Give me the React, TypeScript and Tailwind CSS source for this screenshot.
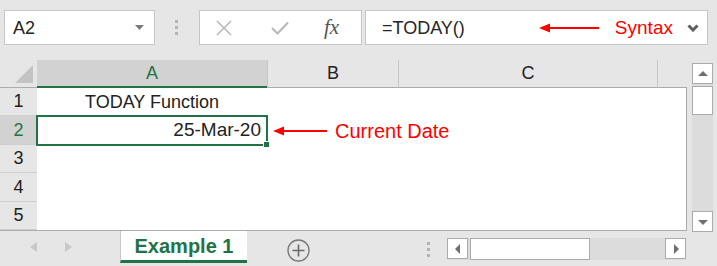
import React from 'react';

const rows = [
  { n: 1, h: 'h-[28px]' },
  { n: 2, h: 'h-[29px]' },
  { n: 3, h: 'h-[28px]' },
  { n: 4, h: 'h-[29px]' },
  { n: 5, h: 'h-[28px]' },
];

const Dots: React.FC = () => (
  <div className="flex flex-col gap-[3px]">
    <div className="w-[3px] h-[3px] bg-[#b4b4b4]" />
    <div className="w-[3px] h-[3px] bg-[#b4b4b4]" />
    <div className="w-[3px] h-[3px] bg-[#b4b4b4]" />
  </div>
);

const RedArrow: React.FC<{ width: number }> = ({ width }) => (
  <svg width={width} height="10" viewBox={`0 0 ${width} 10`}>
    <line x1="8" y1="5" x2={width} y2="5" stroke="#ff0000" strokeWidth="2" />
    <polygon points="0,5 11,0.5 11,9.5" fill="#ff0000" />
  </svg>
);

const ScrollBtn: React.FC<{ dir: 'up' | 'down' | 'left' | 'right' }> = ({ dir }) => {
  const pts = {
    up: '1,7 6,2 11,7',
    down: '1,3 6,8 11,3',
    left: '7,1 2,6 7,11',
    right: '3,1 8,6 3,11',
  }[dir];
  const vertical = dir === 'up' || dir === 'down';
  return (
    <div className="w-[21px] h-[21px] shrink-0 bg-white border border-[#ababab] flex items-center justify-center">
      <svg width={vertical ? 12 : 10} height={vertical ? 10 : 12} viewBox={vertical ? '0 0 12 10' : '0 0 10 12'}>
        <polygon points={pts} fill="#6f6f6f" />
      </svg>
    </div>
  );
};

const App: React.FC = () => {
  return (
    <div
      className="w-[717px] h-[266px] bg-[#e6e6e6] overflow-hidden flex flex-col text-[18px] text-[#222]"
      style={{ fontFamily: '"Liberation Sans", Arial, sans-serif' }}
    >
      {/* formula bar */}
      <div className="h-[60px] pt-[10px] pl-[4px] flex items-start">
        <div className="w-[151px] h-[35px] bg-white border border-[#c6c6c6] flex items-center justify-between pl-[8px] pr-[10px]">
          <span className="leading-none">A2</span>
          <svg width="9" height="5" viewBox="0 0 9 5">
            <polygon points="0,0 9,0 4.5,5" fill="#7a7a7a" />
          </svg>
        </div>
        <div className="ml-[20px] mt-[10px]">
          <Dots />
        </div>
        <div className="ml-[21px] w-[163px] h-[35px] bg-white border border-[#c6c6c6] flex items-center">
          <svg className="ml-[16px]" width="16" height="16" viewBox="0 0 16 16">
            <path d="M1 1 L15 15 M15 1 L1 15" stroke="#b8b8b8" strokeWidth="1.6" fill="none" />
          </svg>
          <svg className="ml-[39px]" width="18" height="14" viewBox="0 0 18 14">
            <path d="M1 7 L6.5 12.5 L17 1.5" stroke="#b8b8b8" strokeWidth="2" fill="none" />
          </svg>
          <span
            className="ml-[35px] italic text-[21px] text-[#555] leading-none"
            style={{ fontFamily: '"Liberation Serif", "Times New Roman", serif' }}
          >
            fx
          </span>
        </div>
        <div className="ml-[3px] w-[343px] h-[35px] bg-white border border-[#c6c6c6] flex items-center pl-[16px] pr-[8px]">
          <span className="leading-none text-[#262626]">=TODAY()</span>
          <div className="ml-[74px]">
            <RedArrow width={60} />
          </div>
          <span className="ml-[16px] text-[19px] text-[#ff0000] leading-none">Syntax</span>
          <svg className="ml-auto" width="12" height="8" viewBox="0 0 12 8">
            <path d="M1.5 1.5 L6 6 L10.5 1.5" stroke="#5f5f5f" strokeWidth="3" fill="none" />
          </svg>
        </div>
      </div>

      {/* sheet + vertical scrollbar */}
      <div className="flex h-[171px]">
        <div className="w-[687px] flex flex-col border-b border-[#ababab]">
          {/* column headers */}
          <div className="flex h-[28px]">
            <div className="w-[37px] bg-[#e6e6e6] border-b border-[#ababab] flex items-end justify-end pr-[4px] pb-[4px]">
              <svg width="18" height="18" viewBox="0 0 18 18">
                <polygon points="18,0 18,18 0,18" fill="#c3c3c3" />
              </svg>
            </div>
            <div className="w-[230px] bg-[#d2d2d2] border-b-2 border-[#217346] flex items-center justify-center text-[#217346]">
              A
            </div>
            <div className="w-[131px] border-l border-[#c6c6c6] border-b border-b-[#ababab] flex items-center justify-center">
              B
            </div>
            <div className="w-[259px] border-l border-[#c6c6c6] border-b border-b-[#ababab] flex items-center justify-center">
              C
            </div>
            <div className="w-[30px] border-l border-[#c6c6c6] border-b border-b-[#ababab]" />
          </div>

          {/* rows */}
          {rows.map(r => (
            <div key={r.n} className={`flex ${r.h}`}>
              <div
                className={`w-[37px] shrink-0 border-b border-[#cfcfcf] flex items-center justify-center ${
                  r.n === 2 ? 'bg-[#d2d2d2] text-[#217346]' : 'bg-[#e6e6e6]'
                }`}
              >
                {r.n}
              </div>
              <div className="flex-1 bg-white border-r border-[#ababab] flex items-center">
                {r.n === 1 && (
                  <div className="w-[230px] text-center">TODAY Function</div>
                )}
                {r.n === 2 && (
                  <>
                    <div className="relative w-[230px] h-full flex items-center justify-end pr-[6px] text-[19px]">
                      25-Mar-20
                      <div className="absolute -left-[1px] -right-[1px] -top-[1px] -bottom-[1px] border-2 border-[#217346]" />
                      <div className="absolute -right-[3px] -bottom-[3px] w-[7px] h-[7px] bg-[#217346] border border-white" />
                    </div>
                    <div className="ml-[6px] flex items-center">
                      <RedArrow width={54} />
                      <span className="ml-[8px] text-[20px] text-[#ff0000]">Current Date</span>
                    </div>
                  </>
                )}
              </div>
            </div>
          ))}
        </div>

        <div className="ml-[5px] mt-[3px] w-[21px] h-[169px] bg-[#dcdcdc] flex flex-col">
          <ScrollBtn dir="up" />
          <div className="mt-[2px] h-[29px] bg-white border border-[#ababab]" />
          <div className="flex-1" />
          <ScrollBtn dir="down" />
        </div>
      </div>

      {/* sheet tabs */}
      <div className="flex items-start h-[35px]">
        <div className="w-[120px] h-[32px] flex items-center">
          <svg className="ml-[30px]" width="7" height="10" viewBox="0 0 7 10">
            <polygon points="7,0 0,5 7,10" fill="#c8c8c8" />
          </svg>
          <svg className="ml-[28px]" width="7" height="10" viewBox="0 0 7 10">
            <polygon points="0,0 7,5 0,10" fill="#c8c8c8" />
          </svg>
        </div>
        <div className="w-[127px] h-[32px] bg-white border-l border-[#c6c6c6] border-b-[3px] border-b-[#217346] flex items-center justify-center font-bold text-[20px] text-[#217346]">
          Example 1
        </div>
        <svg className="ml-[40px] mt-[8px]" width="23" height="23" viewBox="0 0 23 23">
          <circle cx="11.5" cy="11.5" r="10.5" stroke="#7a7a7a" strokeWidth="1.4" fill="none" />
          <path d="M11.5 5.5 V17.5 M5.5 11.5 H17.5" stroke="#6a6a6a" strokeWidth="1.6" />
        </svg>
        <div className="ml-[117px] mt-[11px]">
          <Dots />
        </div>
        <div className="ml-[17px] mt-[7px] w-[239px] h-[22px] bg-[#dcdcdc] flex">
          <div className="h-[22px] flex">
            <ScrollBtn dir="left" />
          </div>
          <div className="ml-[2px] w-[120px] h-[22px] bg-white border border-[#ababab]" />
          <div className="flex-1" />
          <ScrollBtn dir="right" />
        </div>
      </div>
    </div>
  );
};

export default App;
